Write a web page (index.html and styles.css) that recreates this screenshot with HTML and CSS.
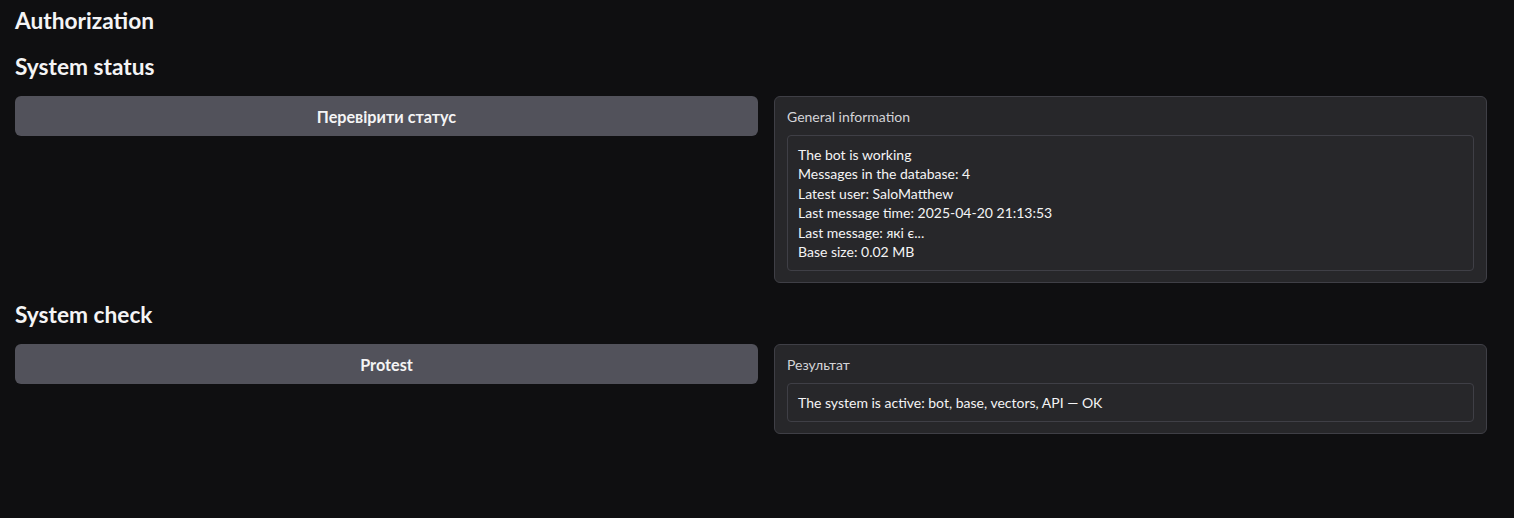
FILE: index.html
```html
<!DOCTYPE html>
<html lang="en">
<head>
<meta charset="utf-8">
<title>Bot status</title>
<link rel="stylesheet" href="styles.css">
</head>
<body>
<main class="app">
  <h2 class="heading heading-first">Authorization</h2>
  <h2 class="heading">System status</h2>
  <section class="row">
    <button class="btn" type="button">Перевірити статус</button>
    <div class="panel">
      <div class="label">General information</div>
      <div class="box">The bot is working<br>Messages in the database: 4<br>Latest user: SaloMatthew<br>Last message time: 2025-04-20 21:13:53<br>Last message: які є...<br>Base size: 0.02 MB</div>
    </div>
  </section>
  <h2 class="heading">System check</h2>
  <section class="row">
    <button class="btn" type="button">Protest</button>
    <div class="panel">
      <div class="label">Результат</div>
      <div class="box">The system is active: bot, base, vectors, API — OK</div>
    </div>
  </section>
</main>
</body>
</html>
```
FILE: styles.css
```css
html, body {
  margin: 0;
  padding: 0;
  background: #0f0f11;
  height: 100%;
}
body {
  font-family: Lato, "Noto Sans", sans-serif;
  color: #f4f4f5;
}
.app {
  padding: 0 15px;
  display: flex;
  flex-direction: column;
}
.heading {
  margin: 0;
  font-size: 22.7px;
  line-height: 30px;
  font-weight: 700;
  color: #f4f4f5;
}
.heading-first {
  margin-top: 6px;
  margin-bottom: 16px;
}
.heading + .row {
  margin-top: 14px;
}
.row + .heading {
  margin-top: 17px;
}
.row {
  display: grid;
  grid-template-columns: 743px 713px;
  column-gap: 16px;
  align-items: start;
}
.btn {
  height: 40px;
  border: none;
  border-radius: 6px;
  background: #52525b;
  color: #f4f4f5;
  font-family: inherit;
  font-size: 16.2px;
  font-weight: 700;
  cursor: pointer;
}
.panel {
  background: #27272a;
  border: 1px solid #3f3f46;
  border-radius: 6px;
  padding: 11px 12px 11px 12px;
}
.label {
  font-size: 14px;
  line-height: 18px;
  color: #d4d4d8;
  margin-bottom: 9px;
}
.box {
  border: 1px solid #3f3f46;
  border-radius: 4px;
  padding: 8.5px 10px;
  font-size: 14px;
  line-height: 19.5px;
  color: #f4f4f5;
}
```
